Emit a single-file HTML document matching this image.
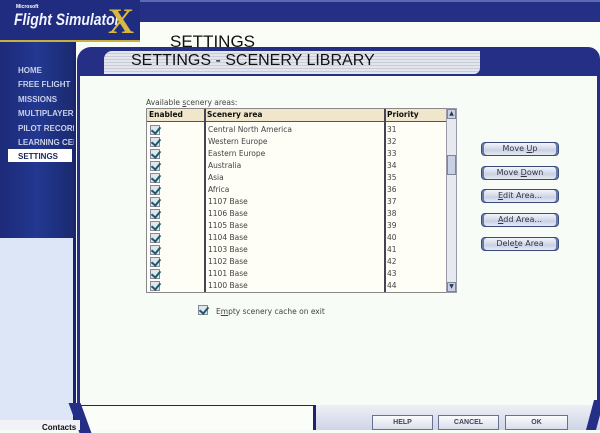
<!DOCTYPE html>
<html><head><meta charset="utf-8"><style>
*{margin:0;padding:0;box-sizing:border-box}
body{width:600px;height:430px;overflow:hidden;background:#f8fcf6;font-family:"DejaVu Sans","Liberation Sans",sans-serif;position:relative}
.a{position:absolute}
.nav{position:absolute;font:bold 8px "Liberation Sans",sans-serif;color:#c8d0e8;left:18px}
.btn{position:absolute;left:481px;width:78px;height:14px;border:1px solid #3a4a7a;border-radius:4px;background:linear-gradient(#f4f6fb,#c9d1e4 60%,#e6eaf3);font-size:8px;color:#334;text-align:center;line-height:12px;box-shadow:inset 2px 0 0 #6a7aa8,inset -2px 0 0 #6a7aa8}
.row{position:absolute;left:0;width:100%;height:12px;font-size:7.5px;color:#444;line-height:12px}
.ck{position:absolute;left:3px;top:1px;width:10px;height:10px;background:#dfe6ee;border:1px solid #889}
.ck:after{content:"";position:absolute;left:2px;top:-1px;width:4px;height:7px;border:solid #1a5a6a;border-width:0 2px 2px 0;transform:rotate(40deg)}
.fb{position:absolute;top:415px;height:15px;border:1px solid #6a7090;background:linear-gradient(#fafbfd,#d8deea);font:bold 7px "Liberation Sans",sans-serif;color:#445;text-align:center;line-height:13px}
</style></head><body>
<div class="a" style="left:0;top:0;width:600px;height:22px;background:#262f86;border-top:2px solid #5a6ab0"></div>
<div class="a" style="left:0;top:0;width:76px;height:420px;background:#dde6f6;border-right:3px solid #1c2470"></div>
<div class="a" style="left:0;top:0;width:74px;height:238px;background:linear-gradient(90deg,#1c2a78,#233891 50%,#1a2a70)"></div>
<div class="a" style="left:0;top:0;width:140px;height:42px;background:#1f2c80;border-bottom:2px solid #c8b040"></div>
<div class="a" style="left:16px;top:4px;font:bold 5px sans-serif;color:#fff">Microsoft</div>
<div class="a" style="left:14px;top:10px;font:italic bold 17px 'Liberation Sans',sans-serif;color:#f0f2ff;transform:scaleX(.82);transform-origin:left;white-space:nowrap">Flight Simulator</div>
<div class="a" style="left:108px;top:0px;font:bold 36px 'Liberation Serif',serif;color:#d8b840">X</div>
<div class="nav" style="top:66px">HOME</div>
<div class="nav" style="top:80px">FREE FLIGHT</div>
<div class="nav" style="top:95px">MISSIONS</div>
<div class="nav" style="top:109px">MULTIPLAYER</div>
<div class="nav" style="top:124px;width:56px;overflow:hidden;white-space:nowrap">PILOT RECORDS</div>
<div class="nav" style="top:138px;width:56px;overflow:hidden;white-space:nowrap">LEARNING CENTER</div>
<div class="a" style="left:8px;top:149px;width:64px;height:13px;background:#fff"></div>
<div class="nav" style="top:152px;color:#1a2458">SETTINGS</div>
<div class="a" style="left:140px;top:22px;width:460px;height:28px;background:#fafcf6"></div>
<div class="a" style="left:170px;top:32px;font:17px 'Liberation Sans',sans-serif;color:#111">SETTINGS</div>
<div class="a" style="left:77px;top:47px;width:523px;height:360px;background:#262f86;border-radius:14px 12px 0 0"></div>
<div class="a" style="left:104px;top:51px;width:376px;height:23px;background:repeating-linear-gradient(#e4e6ee 0 2px,#c8ccd8 2px 3px);border-radius:8px 0 6px 0"></div>
<div class="a" style="left:131px;top:52px;font:16px 'Liberation Sans',sans-serif;color:#111">SETTINGS - SCENERY LIBRARY</div>
<div class="a" style="left:80px;top:76px;width:517px;height:329px;background:#f8fcf6"></div>
<div class="a" style="left:146px;top:98px;font-size:7.5px;color:#444">Available <u>s</u>cenery areas:</div>
<div class="a" style="left:146px;top:108px;width:301px;height:185px;border:1px solid #888;background:#fefdf6">
 <div class="a" style="left:0;top:0;width:299px;height:13px;background:#efe6cc;border-bottom:1px solid #555;font:bold 7.5px 'DejaVu Sans',sans-serif;color:#111;line-height:12px">
  <span class="a" style="left:2px">Enabled</span><span class="a" style="left:60px">Scenery area</span><span class="a" style="left:240px">Priority</span></div>
 <div class="a" style="left:57px;top:0;width:2px;height:183px;background:#445"></div>
 <div class="a" style="left:237px;top:0;width:2px;height:183px;background:#445"></div>
 <div class="a" style="left:0;top:15px;width:299px;height:168px">
  <div class="row" style="top:0"><i class="ck"></i><span class="a" style="left:61px">Central North America</span><span class="a" style="left:240px">31</span></div>
  <div class="row" style="top:12px"><i class="ck"></i><span class="a" style="left:61px">Western Europe</span><span class="a" style="left:240px">32</span></div>
  <div class="row" style="top:24px"><i class="ck"></i><span class="a" style="left:61px">Eastern Europe</span><span class="a" style="left:240px">33</span></div>
  <div class="row" style="top:36px"><i class="ck"></i><span class="a" style="left:61px">Australia</span><span class="a" style="left:240px">34</span></div>
  <div class="row" style="top:48px"><i class="ck"></i><span class="a" style="left:61px">Asia</span><span class="a" style="left:240px">35</span></div>
  <div class="row" style="top:60px"><i class="ck"></i><span class="a" style="left:61px">Africa</span><span class="a" style="left:240px">36</span></div>
  <div class="row" style="top:72px"><i class="ck"></i><span class="a" style="left:61px">1107 Base</span><span class="a" style="left:240px">37</span></div>
  <div class="row" style="top:84px"><i class="ck"></i><span class="a" style="left:61px">1106 Base</span><span class="a" style="left:240px">38</span></div>
  <div class="row" style="top:96px"><i class="ck"></i><span class="a" style="left:61px">1105 Base</span><span class="a" style="left:240px">39</span></div>
  <div class="row" style="top:108px"><i class="ck"></i><span class="a" style="left:61px">1104 Base</span><span class="a" style="left:240px">40</span></div>
  <div class="row" style="top:120px"><i class="ck"></i><span class="a" style="left:61px">1103 Base</span><span class="a" style="left:240px">41</span></div>
  <div class="row" style="top:132px"><i class="ck"></i><span class="a" style="left:61px">1102 Base</span><span class="a" style="left:240px">42</span></div>
  <div class="row" style="top:144px"><i class="ck"></i><span class="a" style="left:61px">1101 Base</span><span class="a" style="left:240px">43</span></div>
  <div class="row" style="top:156px"><i class="ck"></i><span class="a" style="left:61px">1100 Base</span><span class="a" style="left:240px">44</span></div>
 </div>
</div>
<div class="a" style="left:446px;top:108px;width:11px;height:185px;background:#e6eaf0;border:1px solid #99a"></div>
<div class="a" style="left:447px;top:109px;width:9px;height:10px;background:#c8d0e4;border:1px solid #789;font-size:6px;text-align:center;line-height:8px;color:#335">▲</div>
<div class="a" style="left:447px;top:155px;width:9px;height:20px;background:#c8d0e4;border:1px solid #789"></div>
<div class="a" style="left:447px;top:282px;width:9px;height:10px;background:#c8d0e4;border:1px solid #789;font-size:6px;text-align:center;line-height:8px;color:#335">▼</div>
<div class="btn" style="top:142px">Move <u>U</u>p</div>
<div class="btn" style="top:166px">Move <u>D</u>own</div>
<div class="btn" style="top:189px"><u>E</u>dit Area...</div>
<div class="btn" style="top:213px"><u>A</u>dd Area...</div>
<div class="btn" style="top:237px">Dele<u>t</u>e Area</div>
<div class="a" style="left:198px;top:305px;width:12px;height:12px"><i class="ck" style="left:0;top:0"></i></div>
<div class="a" style="left:216px;top:307px;font-size:7.5px;color:#444">E<u>m</u>pty scenery cache on exit</div>
<div class="a" style="left:315px;top:405px;width:285px;height:25px;background:linear-gradient(#eef0f6,#cfd5e6)"></div>
<div class="a" style="left:590px;top:400px;width:10px;height:30px;background:#262f86;transform:skewX(-15deg)"></div>
<div class="a" style="left:80px;top:405px;width:236px;height:25px;background:#fbfdf8;border-right:3px solid #1c2470;border-top:1px solid #1c2470"></div>
<div class="a" style="left:74px;top:403px;width:12px;height:30px;background:#232e86;transform:skewX(20deg)"></div>
<div class="a" style="left:0;top:420px;width:80px;height:10px;background:#f0f2f8"></div>
<div class="a" style="left:42px;top:423px;font:bold 8px 'Liberation Sans',sans-serif;color:#111">Contacts</div>
<div class="fb" style="left:372px;width:61px">HELP</div>
<div class="fb" style="left:438px;width:61px">CANCEL</div>
<div class="fb" style="left:505px;width:63px">OK</div>
</body></html>
